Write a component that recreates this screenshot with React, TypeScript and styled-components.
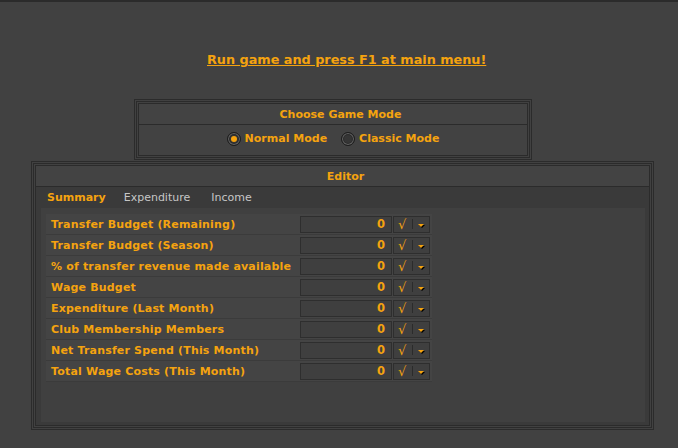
import React from 'react';
import styled, { createGlobalStyle } from 'styled-components';

const ORANGE = '#f5a30f';
const LINE = '#2b2b2b';
const BG = '#414141';
const FONT = '"DejaVu Sans", Verdana, sans-serif';

const Global = createGlobalStyle`
  html, body { margin: 0; padding: 0; background: ${BG}; }
  body { font-family: ${FONT}; width: 678px; height: 448px; overflow: hidden; }
`;

const Page = styled.div`
  height: 448px;
  box-sizing: border-box;
  border-top: 2px solid ${LINE};
  display: flex;
  flex-direction: column;
  align-items: flex-start;
`;

const TitleLink = styled.a`
  margin: 50px 0 0 207px;
  font: bold 12.8px/16px ${FONT};
  color: ${ORANGE};
  text-decoration: underline;
  cursor: pointer;
`;

const Frame = styled.div<{ $w: number; $h: number; $ml: number; $mt: number }>`
  box-sizing: border-box;
  width: ${(p) => p.$w}px;
  height: ${(p) => p.$h}px;
  margin: ${(p) => p.$mt}px 0 0 ${(p) => p.$ml}px;
  padding: 4px;
  box-shadow: inset 0 0 0 1px ${LINE}, inset 0 0 0 2px ${BG}, inset 0 0 0 3px ${LINE};
  display: flex;
`;

const Inner = styled.div`
  flex: 1;
  border: 1px solid ${LINE};
  display: flex;
  flex-direction: column;
  background: #424242;
`;

const Header = styled.div<{ $shift?: number }>`
  height: 20px;
  flex: none;
  border-bottom: 1px solid ${LINE};
  display: flex;
  align-items: center;
  justify-content: center;
  padding-left: ${(p) => p.$shift ?? 0}px;
  font: bold 11px ${FONT};
  color: ${ORANGE};
  background: #434343;
`;

const RadioBody = styled.div`
  flex: 1;
  display: flex;
  align-items: center;
  justify-content: center;
  padding-bottom: 3px;
`;

const RadioOption = styled.label`
  display: flex;
  align-items: center;
  gap: 4px;
  margin: 0 7px;
  font: bold 11px ${FONT};
  color: ${ORANGE};
  cursor: pointer;
`;

const RadioCircle = styled.span<{ $on?: boolean }>`
  box-sizing: border-box;
  width: 14px;
  height: 14px;
  border-radius: 50%;
  border: 1px solid #1c1c1c;
  background: #353535;
  box-shadow: inset 0 0 0 1px #666666, inset 0 0 0 2px #2a2a2a;
  display: flex;
  align-items: center;
  justify-content: center;
  &::after {
    content: '';
    display: ${(p) => (p.$on ? 'block' : 'none')};
    width: 6px;
    height: 6px;
    border-radius: 50%;
    background: ${ORANGE};
  }
`;

const EditorBody = styled.div`
  flex: 1;
  display: flex;
  flex-direction: column;
  background: #3a3a3a;
`;

const TabBar = styled.div`
  height: 21px;
  flex: none;
  display: flex;
  align-items: center;
  gap: 18px;
  padding-left: 11px;
`;

const Tab = styled.span<{ $active?: boolean }>`
  font: ${(p) => (p.$active ? 'bold' : 'normal')} 11px ${FONT};
  color: ${(p) => (p.$active ? ORANGE : '#c6c6c6')};
  margin-right: ${(p) => (p.$active ? 0 : 3)}px;
  cursor: pointer;
`;

const Content = styled.div`
  flex: 1;
  margin: 0 4px 3px 5px;
  background: #404040;
  padding: 6px 0 0 5px;
  display: flex;
  flex-direction: column;
`;

const Row = styled.div`
  width: 386px;
  height: 20px;
  border-bottom: 1px solid #3b3b3b;
  background: #444444;
  display: flex;
  align-items: center;
`;

const Label = styled.span`
  width: 249px;
  padding-left: 5px;
  font: bold 11px ${FONT};
  letter-spacing: 0.18px;
  color: ${ORANGE};
  white-space: nowrap;
`;

const ValueBox = styled.div`
  box-sizing: border-box;
  width: 92px;
  height: 17px;
  border: 1px solid #2e2e2e;
  background: #3f3f3f;
  display: flex;
  align-items: center;
  justify-content: flex-end;
  padding-right: 6px;
  font: bold 11.5px ${FONT};
  color: ${ORANGE};
`;

const Controls = styled.div`
  box-sizing: border-box;
  width: 37px;
  height: 17px;
  margin-left: 1px;
  border: 1px solid #2e2e2e;
  background: #3f3f3f;
  display: flex;
  align-items: center;
  padding-left: 4px;
`;

const Check = styled.span`
  font: normal 13px/1 ${FONT};
  color: ${ORANGE};
  width: 10px;
`;

const Sep = styled.span`
  width: 1px;
  height: 10px;
  background: #2b2b2b;
  margin: 0 5px 0 4px;
`;

const Arrow = styled.span`
  width: 0;
  height: 0;
  margin-top: 2px;
  border-left: 3px solid transparent;
  border-right: 3px solid transparent;
  border-top: 3px solid ${ORANGE};
  filter: drop-shadow(1px 1px 0 #000);
`;

const rows = [
  'Transfer Budget (Remaining)',
  'Transfer Budget (Season)',
  '% of transfer revenue made available',
  'Wage Budget',
  'Expenditure (Last Month)',
  'Club Membership Members',
  'Net Transfer Spend (This Month)',
  'Total Wage Costs (This Month)',
];

export default function App() {
  return (
    <>
      <Global />
      <Page>
        <TitleLink>Run game and press F1 at main menu!</TitleLink>
        <Frame $w={398} $h={61} $ml={134} $mt={31}>
          <Inner>
            <Header $shift={15}>Choose Game Mode</Header>
            <RadioBody>
              <RadioOption>
                <RadioCircle $on />
                Normal Mode
              </RadioOption>
              <RadioOption>
                <RadioCircle />
                Classic Mode
              </RadioOption>
            </RadioBody>
          </Inner>
        </Frame>
        <Frame $w={623} $h={269} $ml={31} $mt={1}>
          <Inner>
            <Header $shift={6}>Editor</Header>
            <EditorBody>
              <TabBar>
                <Tab $active>Summary</Tab>
                <Tab>Expenditure</Tab>
                <Tab>Income</Tab>
              </TabBar>
              <Content>
                {rows.map((r) => (
                  <Row key={r}>
                    <Label>{r}</Label>
                    <ValueBox>0</ValueBox>
                    <Controls>
                      <Check>√</Check>
                      <Sep />
                      <Arrow />
                    </Controls>
                  </Row>
                ))}
              </Content>
            </EditorBody>
          </Inner>
        </Frame>
      </Page>
    </>
  );
}
